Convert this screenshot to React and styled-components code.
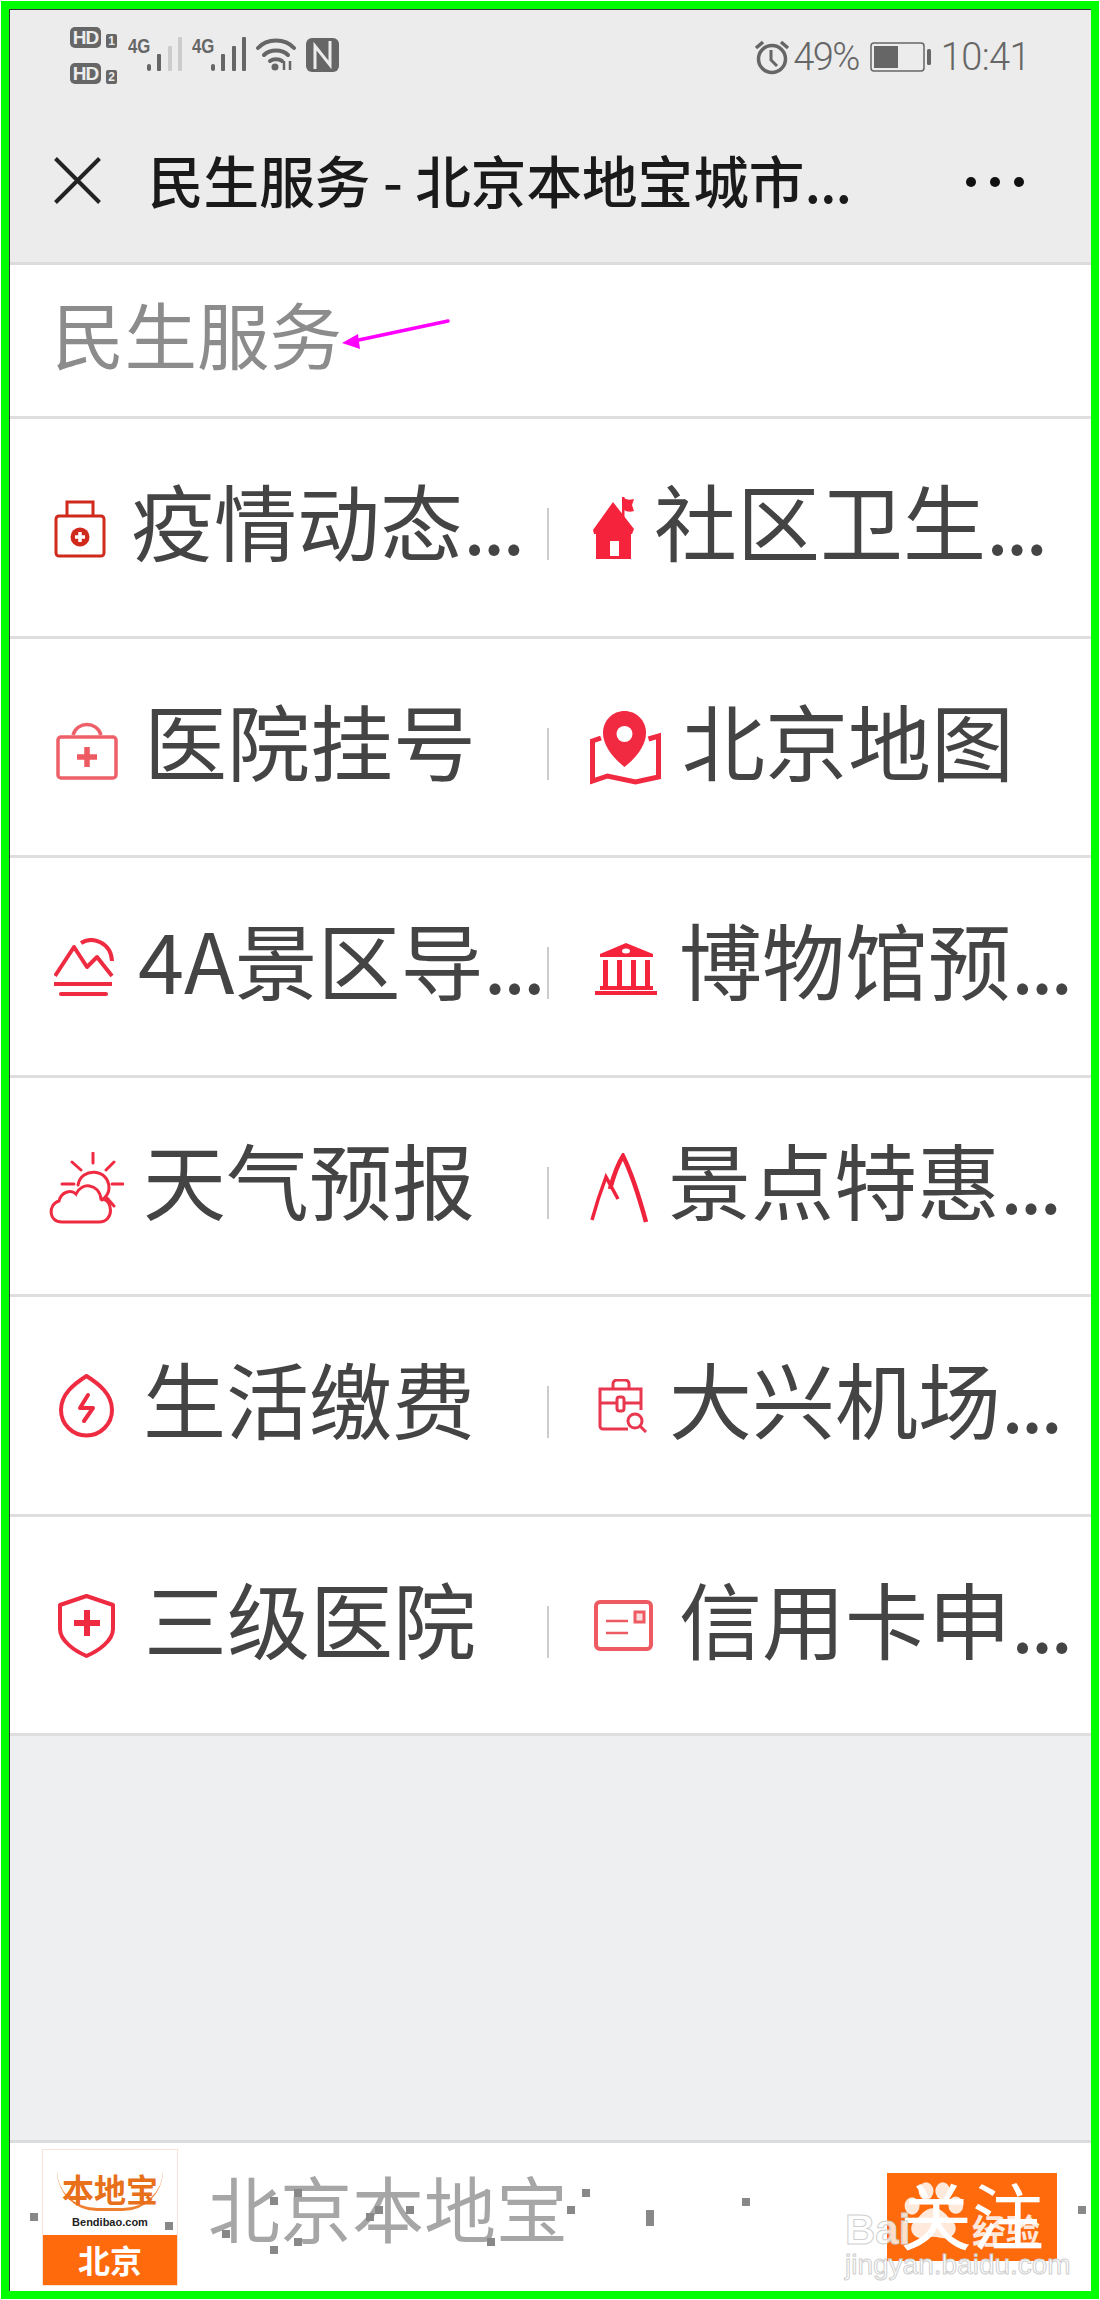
import React from "react";
import styled, { createGlobalStyle } from "styled-components";

const CJK = `"Noto Sans CJK SC", "Noto Sans", sans-serif`;

const Global = createGlobalStyle`
  html, body { margin: 0; padding: 0; background: #fff; }
  * { box-sizing: border-box; }
`;

const Frame = styled.div`
  width: 1100px;
  height: 2300px;
  border: 1px solid #fff;
  font-family: ${CJK};
`;
const FrameGreen = styled.div`
  height: 100%;
  border: 8px solid #00ff00;
`;
const Page = styled.div`
  height: 100%;
  border-top: 1px solid #333;
  border-left: 1px solid #333;
  display: flex;
  flex-direction: column;
  background: #eeeff1;
  overflow: hidden;
`;

const StatusBar = styled.div`
  height: 92px;
  flex: none;
  background: #ececec;
  display: flex;
  align-items: flex-start;
  justify-content: space-between;
  padding: 17px 61px 0 60px;
  color: #666;
`;
const StatusLeft = styled.div`
  display: flex;
  align-items: flex-start;
`;
const SimColumn = styled.div`
  display: flex;
  flex-direction: column;
  gap: 15px;
  margin-right: 11px;
`;
const SimRow = styled.div`
  display: flex;
  align-items: flex-end;
  gap: 5px;
`;
const HdBadge = styled.span`
  width: 31px;
  height: 21px;
  border-radius: 5px;
  background: #666;
  color: #ececec;
  font: 700 19px/21px "Liberation Sans", sans-serif;
  text-align: center;
  letter-spacing: -1px;
`;
const SimNo = styled.span`
  width: 11px;
  height: 14px;
  border-radius: 2px;
  background: #666;
  color: #ececec;
  font: 700 12px/14px "Liberation Sans", sans-serif;
  text-align: center;
`;
const StatusIcon = styled.svg`
  display: block;
  margin: ${(p) => p.$m || "11px 10px 0 0"};
`;
const StatusRight = styled.div`
  display: flex;
  align-items: center;
  margin-top: 10px;
  font: 300 38px/40px Roboto, sans-serif;
  color: #666;
  letter-spacing: -1.6px;
`;
const Pct = styled.span`
  margin: 0 11px 0 3px;
`;
const Clock = styled.span`
  margin-left: 9px;
  letter-spacing: -0.6px;
`;
const InlineIcon = styled.svg`
  display: block;
  flex: none;
`;

const NavBar = styled.div`
  height: 163px;
  flex: none;
  background: #ececec;
  border-bottom: 3px solid #dcdcdc;
  display: flex;
  align-items: center;
  padding: 0 67px 4px 44px;
`;
const NavTitle = styled.div`
  margin: -2px 0 0 47px;
  font-size: 55.6px;
  line-height: 70px;
  color: #1a1a1a;
  white-space: nowrap;
  font-weight: 500;
`;
const NavDots = styled.span`
  letter-spacing: -1px;
`;
const MenuDots = styled.div`
  margin: 4px 0 0 auto;
  display: flex;
  gap: 14px;
`;
const Dot = styled.span`
  width: 10px;
  height: 10px;
  border-radius: 50%;
  background: #111;
`;

const Heading = styled.div`
  height: 154px;
  flex: none;
  background: #fff;
  border-bottom: 3px solid #dedede;
  padding: 0 0 16px 42px;
  display: flex;
  align-items: center;
  position: relative;
  color: #8c8c8c;
  font-size: 72.5px;
  line-height: 100px;
`;
const Arrow = styled.svg`
  position: absolute;
  left: 324px;
  top: 50px;
`;

const Row = styled.div`
  height: 219.5px;
  flex: none;
  background: #fff;
  border-bottom: 3px solid #dedede;
  display: flex;
  align-items: center;
`;
const Cell = styled.div`
  display: flex;
  align-items: center;
  height: 100%;
  padding-left: ${(p) => p.$pad}px;
  width: ${(p) => (p.$left ? "537px" : "auto")};
  flex: ${(p) => (p.$left ? "none" : "1")};
  min-width: 0;
`;
const CellIcon = styled.svg`
  display: block;
  flex: none;
  margin-top: ${(p) => p.$dy || 0}px;
`;
const CellText = styled.span`
  margin-left: ${(p) => p.$gap}px;
  margin-top: -16px;
  font-size: 83px;
  line-height: 110px;
  color: #444;
  white-space: nowrap;
`;
const More = styled.span`
  letter-spacing: -3.5px;
`;
const Divider = styled.span`
  width: 2px;
  height: 52px;
  margin-top: 14px;
  background: #ccc;
  flex: none;
`;

const Spacer = styled.div`
  flex: 1;
  background: #eeeff1;
`;

const Footer = styled.div`
  height: 151px;
  flex: none;
  background: #fff;
  border-top: 3px solid #dcdcdc;
  display: flex;
  align-items: center;
  padding: 0 34px 0 32px;
  position: relative;
`;
const Logo = styled.div`
  width: 136px;
  height: 137px;
  display: flex;
  flex-direction: column;
  border: 1px solid #f6e2d6;
  flex: none;
`;
const LogoTop = styled.div`
  flex: 1;
  display: flex;
  flex-direction: column;
  align-items: center;
  padding-top: 18px;
`;
const LogoName = styled.div`
  font-size: 32px;
  line-height: 40px;
  font-weight: 700;
  color: #e8701a;
  border-bottom: 3px solid #f08030;
  padding: 0 5px;
  border-radius: 0 0 40px 40px;
`;
const LogoUrl = styled.div`
  font: 700 11px/16px "Liberation Sans", sans-serif;
  color: #222;
  margin-top: 3px;
`;
const LogoCity = styled.div`
  height: 50px;
  background: #ff6a0d;
  color: #fff;
  text-align: center;
  font-size: 32px;
  line-height: 48px;
  font-weight: 700;
`;
const FooterName = styled.div`
  margin: -22px 0 0 30px;
  font-size: 72px;
  line-height: 90px;
  color: #a6a6a6;
`;
const Follow = styled.div`
  margin-left: auto;
  width: 170px;
  height: 88px;
  background: #ff6a0d;
  color: #fff;
  font-size: 72px;
  line-height: 80px;
  font-weight: 400;
  text-align: center;
`;
const Watermark = styled.div`
  position: absolute;
  left: 835px;
  top: 37px;
  width: 210px;
  height: 110px;
  color: rgba(255, 255, 255, 0.85);
  font-family: "Liberation Sans", sans-serif;
`;
const WmBai = styled.span`
  position: absolute;
  left: 0;
  top: 25px;
  font-size: 42px;
  line-height: 50px;
  font-weight: 700;
  color: rgba(255, 255, 255, 0.8);
  -webkit-text-stroke: 1px #d0d0d0;
`;
const WmPaw = styled.svg`
  position: absolute;
  left: 55px;
  top: 0;
`;
const WmCn = styled.span`
  position: absolute;
  left: 127px;
  top: 25px;
  font-family: ${CJK};
  font-size: 34px;
  line-height: 50px;
  font-weight: 700;
  white-space: nowrap;
`;
const WmUrl = styled.span`
  position: absolute;
  left: 0;
  top: 68px;
  font-size: 28px;
  line-height: 34px;
  white-space: nowrap;
  color: #fff;
  -webkit-text-stroke: 1px #cfcfcf;
`;
const Speck = styled.span`
  position: absolute;
  left: ${(p) => p.$x - 10}px;
  top: ${(p) => p.$y - 2143}px;
  width: 8px;
  height: ${(p) => p.$h || 8}px;
  background: #888;
`;
const NetGroup = styled.div`
  display: flex;
  align-items: flex-start;
  margin-right: 9px;
`;
const NetLabel = styled.span`
  font: 700 21px/24px "Liberation Sans", sans-serif;
  color: #666;
  margin: 7px -1px 0 0;
  transform: scaleX(0.8);
  transform-origin: left;
  width: 20px;
  white-space: nowrap;
`;
const BarsSvg = styled.svg`
  display: block;
  margin-top: 10px;
`;

const RED = "#ef2b42";

const KitIcon = () => (
  <CellIcon width="52" height="59" viewBox="0 0 52 59" $dy={3}>
    <rect x="2" y="17" width="48" height="40" rx="3" fill="none" stroke="#cf2a1c" strokeWidth="3" />
    <path d="M13 17V3h26v14" fill="none" stroke="#cf2a1c" strokeWidth="3" />
    <circle cx="26" cy="38" r="9.5" fill="#cf2a1c" />
    <path d="M26 33v10M21 38h10" stroke="#fff" strokeWidth="3.5" />
  </CellIcon>
);
const BagIcon = () => (
  <CellIcon width="62" height="62" viewBox="0 0 62 62" $dy={4}>
    <rect x="2" y="19" width="58" height="41" rx="3" fill="none" stroke="#ee6069" strokeWidth="3.5" />
    <path d="M17 17C21 3 41 3 45 17" fill="none" stroke="#ee6069" strokeWidth="3.5" />
    <path d="M31 29v20M21 39h20" stroke="#ee5a62" strokeWidth="5.5" />
  </CellIcon>
);
const ScenicIcon = () => (
  <CellIcon width="60" height="58" viewBox="0 0 60 58" $dy={2}>
    <path d="M1 38 20 9l13 20 10-10 15 19" fill="none" stroke={RED} strokeWidth="4" strokeLinejoin="round" />
    <path d="M27 5C38-2 57 4 58 23" fill="none" stroke={RED} strokeWidth="4" />
    <path d="M0 46h58" stroke={RED} strokeWidth="4" />
    <path d="M7 56h45" stroke={RED} strokeWidth="4" strokeLinecap="round" />
  </CellIcon>
);
const WeatherIcon = () => (
  <CellIcon width="75" height="72" viewBox="0 0 75 72" $dy={4}>
    <g fill="none" stroke={RED} strokeWidth="3" strokeLinecap="round">
      <path d="M44 1v10M23 10l9 8M65 10l-8 8M13 32h12M63 32h11M58 46l7 8" />
      <path d="M29 33C32 15 60 16 60 36c0 5-3 9-7 12" />
      <path d="M13 70C-1 70-1 52 10 49 12 40 22 37 27 42 32 30 50 31 52 47c12-1 14 23-2 23Z" />
    </g>
  </CellIcon>
);
const ShieldIcon = () => (
  <CellIcon width="57" height="64" viewBox="0 0 57 64" $dy={2}>
    <path d="M28.5 2 55 11v24c0 12-15 22-26.500 27C17 57 2 47 2 35V11Z" fill="none" stroke={RED} strokeWidth="4" strokeLinejoin="round" />
    <path d="M29 16v26M16 29h26" stroke={RED} strokeWidth="6" />
  </CellIcon>
);
const DropIcon = () => (
  <CellIcon width="55" height="64" viewBox="0 0 55 64" $dy={2}>
    <path d="M27.500 2C40 10 53 20 53 36a25.500 25.500 0 0 1-51 0C2 20 15 10 27.500 2Z" fill="none" stroke={RED} strokeWidth="4" />
    <path d="M29 21 21 34h13l-9 13" fill="none" stroke={RED} strokeWidth="4" strokeLinecap="round" strokeLinejoin="round" />
  </CellIcon>
);
const HouseIcon = () => (
  <CellIcon width="42" height="63" viewBox="0 0 42 63" $dy={3}>
    <path d="M20 5 41 32l-2 5h-1v25H3V37H1l-1-4Z" fill="#f5233b" />
    <path d="M29 0h2.500v28H29Z" fill="#f5233b" />
    <path d="M31 1c3 2 6 2 10 1l-2 6 2 6c-4 1-7 1-10-1Z" fill="#f5233b" />
    <rect x="17" y="44" width="9" height="15" fill="#fff" />
  </CellIcon>
);
const MapIcon = () => (
  <CellIcon width="71" height="75" viewBox="0 0 71 75" $dy={4}>
    <path d="M11 27 2.500 30v40l15-5 28 6 23-5V25l-10 3" fill="none" stroke="#f12a42" strokeWidth="5" />
    <path d="M34.500 56C22 46 13 34 13 22 13 9 23 0 34.500 0S56 9 56 22c0 12-9 24-21.500 34Z" fill="#f12a42" />
    <ellipse cx="34.500" cy="23" rx="8" ry="8" fill="#fff" />
  </CellIcon>
);
const MuseumIcon = () => (
  <CellIcon width="62" height="52" viewBox="0 0 62 52" $dy={6}>
    <path d="M31 0 58 11v3H5v-3Z" fill="#f5233b" />
    <ellipse cx="31" cy="8" rx="4" ry="2.500" fill="#fff" />
    <path d="M8 17h5v26H8ZM22 17h5v26h-5ZM36 17h5v26h-5ZM50 17h5v26h-5Z" fill="#f5233b" />
    <path d="M5 43h53v4H5ZM0 48h62v4H0Z" fill="#f5233b" />
  </CellIcon>
);
const PeakIcon = () => (
  <CellIcon width="59" height="70" viewBox="0 0 59 70" $dy={4}>
    <path d="M2 67Q8 45 16 24L28 46" fill="none" stroke="#f0233d" strokeWidth="3.500" />
    <path d="M20 36Q26 14 33 3 44 25 56 69" fill="none" stroke="#f0233d" strokeWidth="4.500" />
  </CellIcon>
);
const CaseIcon = () => (
  <CellIcon width="49" height="54" viewBox="0 0 49 54" $dy={2}>
    <g fill="none" stroke="#e8374f" strokeWidth="3">
      <path d="M30 50H5a3 3 0 0 1-3-3V10h41v21" />
      <path d="M15 10V5a4 4 0 0 1 4-4h8a4 4 0 0 1 4 4v5M2 24h17M27 24h16" />
      <rect x="19" y="18" width="7" height="14" rx="2.500" />
      <circle cx="37" cy="42" r="7" />
      <path d="m42 47 6 6" />
    </g>
  </CellIcon>
);
const CardIcon = () => (
  <CellIcon width="59" height="51" viewBox="0 0 59 51" $dy={2}>
    <rect x="2" y="2" width="55" height="47" rx="4" fill="none" stroke="#ee5a62" strokeWidth="4" />
    <path d="M12 21h22M12 33h22" stroke="#ee5a62" strokeWidth="2.500" />
    <rect x="41" y="12" width="9" height="10" fill="#fbdcdc" stroke="#ee5a62" strokeWidth="3" />
  </CellIcon>
);

const rows = [
  [
    { Icon: KitIcon, pad: 44, gap: 25, text: "疫情动态", more: true },
    { Icon: HouseIcon, pad: 44, gap: 19, text: "社区卫生", more: true },
  ],
  [
    { Icon: BagIcon, pad: 46, gap: 26, text: "医院挂号" },
    { Icon: MapIcon, pad: 41, gap: 21, text: "北京地图" },
  ],
  [
    { Icon: ScenicIcon, pad: 44, gap: 24, text: "4A景区导", more: true },
    { Icon: MuseumIcon, pad: 46, gap: 22, text: "博物馆预", more: true },
  ],
  [
    { Icon: WeatherIcon, pad: 39, gap: 19, text: "天气预报" },
    { Icon: PeakIcon, pad: 41, gap: 19, text: "景点特惠", more: true },
  ],
  [
    { Icon: DropIcon, pad: 49, gap: 29, text: "生活缴费" },
    { Icon: CaseIcon, pad: 49, gap: 22, text: "大兴机场", more: true },
  ],
  [
    { Icon: ShieldIcon, pad: 48, gap: 29, text: "三级医院" },
    { Icon: CardIcon, pad: 45, gap: 26, text: "信用卡申", more: true },
  ],
];

const specks = [
  [30, 2213], [270, 2197], [294, 2189], [222, 2230], [270, 2246], [294, 2238], [165, 2222],
  [406, 2206], [375, 2206], [366, 2213], [487, 2238], [567, 2206], [582, 2189],
  [646, 2210, 16], [742, 2198], [1078, 2206],
];

const Bars = ({ dim }) => (
  <BarsSvg width="36" height="34" viewBox="0 0 36 34">
    <rect x="0" y="27" width="4" height="7" rx="2" fill="#666" />
    <rect x="10" y="17" width="4" height="17" rx="1" fill="#666" />
    <rect x="21" y="9" width="4" height="25" rx="1" fill={dim ? "#ccc" : "#666"} />
    <rect x="31" y="0" width="4" height="34" rx="1" fill={dim ? "#ccc" : "#666"} />
  </BarsSvg>
);

const Entry = ({ item }) => (
  <>
    <item.Icon />
    <CellText $gap={item.gap}>
      {item.text}
      {item.more && <More>...</More>}
    </CellText>
  </>
);

export default function App() {
  return (
    <Frame>
      <Global />
      <FrameGreen>
        <Page>
          <StatusBar>
            <StatusLeft>
              <SimColumn>
                <SimRow><HdBadge>HD</HdBadge><SimNo>1</SimNo></SimRow>
                <SimRow><HdBadge>HD</HdBadge><SimNo>2</SimNo></SimRow>
              </SimColumn>
              <NetGroup><NetLabel>4G</NetLabel><Bars dim /></NetGroup>
              <NetGroup><NetLabel>4G</NetLabel><Bars /></NetGroup>
              <StatusIcon width="40" height="34" viewBox="0 0 40 34" $m="10px 10px 0 0">
                <g fill="none" stroke="#666" strokeWidth="4" strokeLinecap="round">
                  <path d="M2 11C11 1 29 1 38 11" />
                  <path d="M8 18c6-6 18-6 24 0" />
                  <path d="M14 24c3-2.500 9-2.500 12 0" />
                </g>
                <circle cx="19" cy="30" r="3.500" fill="#666" />
                <path d="M28 33v-9M34 33v-9" stroke="#666" strokeWidth="2.500" />
              </StatusIcon>
              <StatusIcon width="33" height="34" viewBox="0 0 33 34" $m="11px 0 0 0">
                <rect x="0" y="0" width="33" height="34" rx="6" fill="#666" />
                <path d="M9 31V8l15 19V3" fill="none" stroke="#ececec" strokeWidth="3" />
              </StatusIcon>
            </StatusLeft>
            <StatusRight>
              <InlineIcon width="36" height="36" viewBox="0 0 36 36">
                <circle cx="18" cy="20" r="13.500" fill="none" stroke="#666" strokeWidth="3.500" />
                <path d="M17 11v10l6 6" fill="none" stroke="#666" strokeWidth="3" />
                <path d="M2 9 9 3M34 9l-7-6" stroke="#666" strokeWidth="3.500" />
              </InlineIcon>
              <Pct>49%</Pct>
              <InlineIcon width="62" height="30" viewBox="0 0 62 30">
                <rect x="1" y="1" width="53" height="28" rx="3" fill="none" stroke="#666" strokeWidth="1.500" />
                <rect x="4" y="4" width="24" height="22" fill="#666" />
                <rect x="57" y="7" width="4" height="16" rx="1.500" fill="#666" />
              </InlineIcon>
              <Clock>10:41</Clock>
            </StatusRight>
          </StatusBar>

          <NavBar>
            <InlineIcon width="47" height="47" viewBox="0 0 47 47">
              <path d="M1.500 1.500 45.500 45.500M45.500 1.500 1.500 45.500" stroke="#222" strokeWidth="4" />
            </InlineIcon>
            <NavTitle>民生服务 - 北京本地宝城市<NavDots>...</NavDots></NavTitle>
            <MenuDots><Dot /><Dot /><Dot /></MenuDots>
          </NavBar>

          <Heading>
            民生服务
            <Arrow width="120" height="40" viewBox="0 0 120 40">
              <path d="M114 6 20 26" stroke="#ff00ff" strokeWidth="3.500" strokeLinecap="round" />
              <path d="M8 28 24 19l2 15Z" fill="#ff00ff" />
            </Arrow>
          </Heading>

          {rows.map(([a, b], i) => (
            <Row key={i}>
              <Cell $left $pad={a.pad}><Entry item={a} /></Cell>
              <Divider />
              <Cell $pad={b.pad}><Entry item={b} /></Cell>
            </Row>
          ))}

          <Spacer />

          <Footer>
            <Logo>
              <LogoTop>
                <LogoName>本地宝</LogoName>
                <LogoUrl>Bendibao.com</LogoUrl>
              </LogoTop>
              <LogoCity>北京</LogoCity>
            </Logo>
            <FooterName>北京本地宝</FooterName>
            <Follow>关注</Follow>
            <Watermark>
              <WmBai>Bai</WmBai>
              <WmPaw width="67" height="63" viewBox="0 0 72 80" preserveAspectRatio="none">
                <g fill="rgba(255,255,255,0.85)">
                  <ellipse cx="13" cy="33" rx="8" ry="11" />
                  <ellipse cx="28" cy="14" rx="8" ry="11" />
                  <ellipse cx="46" cy="14" rx="8" ry="11" />
                  <ellipse cx="60" cy="32" rx="8" ry="11" />
                  <path d="M36 36c10 0 14 10 20 16 8 8 3 22-8 22-5 0-8-2-12-2s-7 2-12 2C13 74 8 60 16 52c6-6 10-16 20-16Z" />
                </g>
              </WmPaw>
              <WmCn>经验</WmCn>
              <WmUrl>jingyan.baidu.com</WmUrl>
            </Watermark>
            {specks.map(([x, y, h], i) => (
              <Speck key={i} $x={x} $y={y} $h={h} />
            ))}
          </Footer>
        </Page>
      </FrameGreen>
    </Frame>
  );
}
